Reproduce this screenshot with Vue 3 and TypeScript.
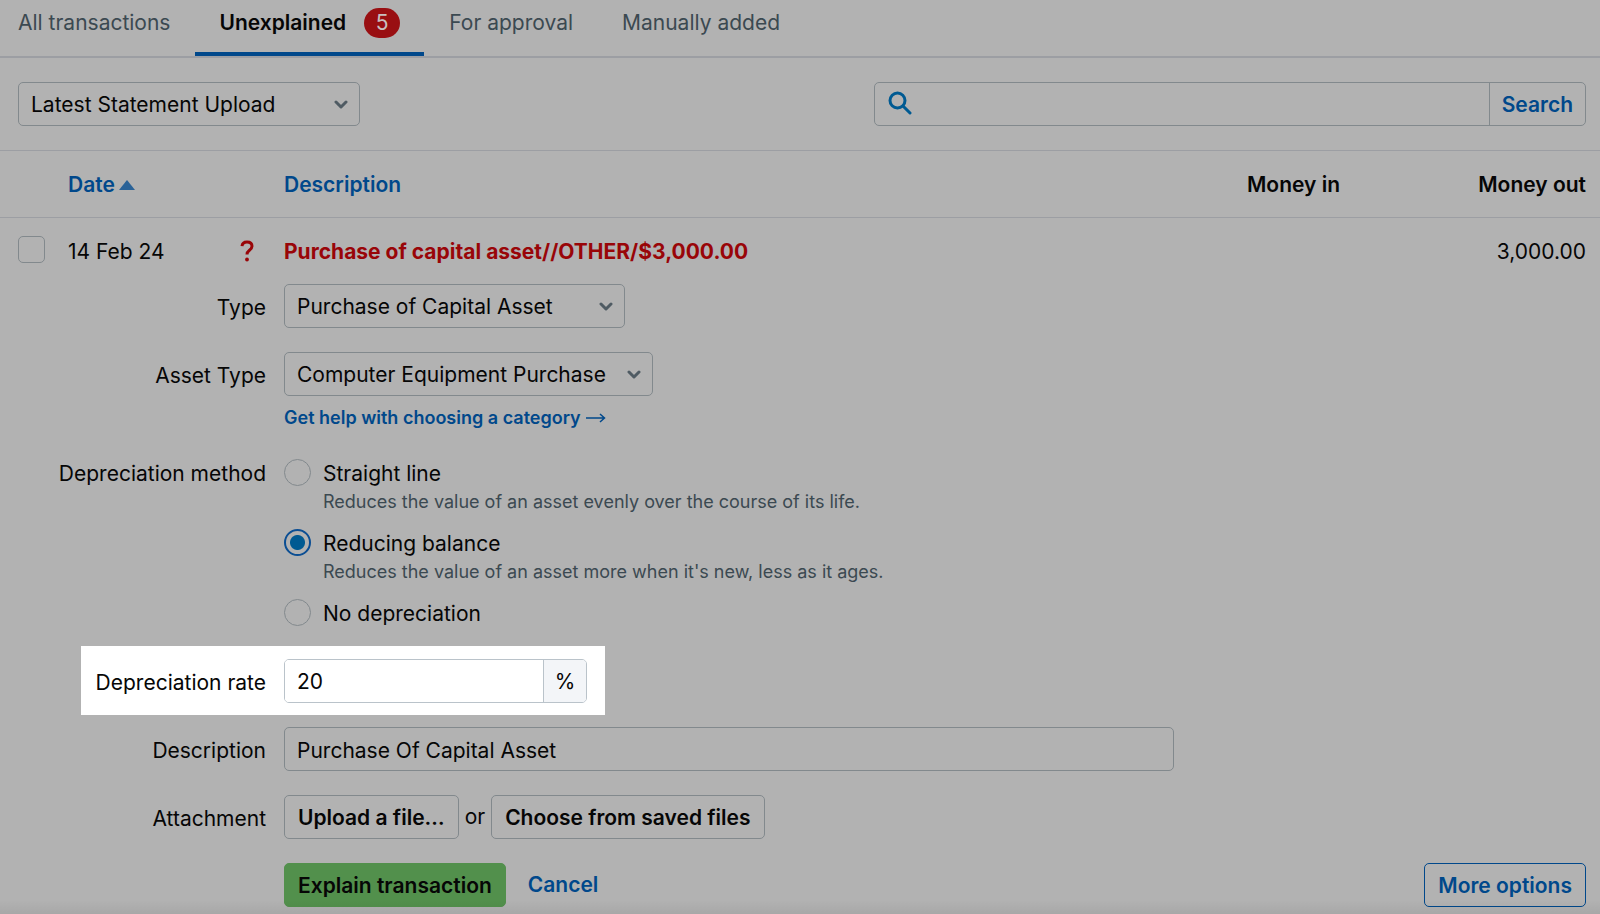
<script setup lang="ts">
import { ref } from 'vue'

interface Tab {
  label: string
  count?: number
}

interface Method {
  id: string
  label: string
  hint?: string
}

const tabs: Tab[] = [
  { label: 'All transactions' },
  { label: 'Unexplained', count: 5 },
  { label: 'For approval' },
  { label: 'Manually added' },
]

const methods: Method[] = [
  {
    id: 'straight',
    label: 'Straight line',
    hint: 'Reduces the value of an asset evenly over the course of its life.',
  },
  {
    id: 'reducing',
    label: 'Reducing balance',
    hint: "Reduces the value of an asset more when it's new, less as it ages.",
  },
  { id: 'none', label: 'No depreciation' },
]

const activeTab = ref('Unexplained')
const query = ref('')
const method = ref('reducing')
const rate = ref('20')
const description = ref('Purchase Of Capital Asset')
</script>

<template>
  <main class="page">
    <nav class="tabs" aria-label="Transaction filters">
      <a
        v-for="tab in tabs"
        :key="tab.label"
        href="#"
        class="tab"
        :class="{ active: tab.label === activeTab }"
        @click.prevent="activeTab = tab.label"
      >
        {{ tab.label }}
        <span v-if="tab.count" class="badge">{{ tab.count }}</span>
      </a>
    </nav>

    <div class="toolbar">
      <div class="select statement">
        <select aria-label="Statement">
          <option>Latest Statement Upload</option>
        </select>
        <svg class="chevron" viewBox="0 0 14 10" aria-hidden="true"><path d="M2 2l5 5 5-5" /></svg>
      </div>
      <form class="search" role="search" @submit.prevent>
        <svg class="magnifier" viewBox="0 0 24 24" aria-hidden="true">
          <circle cx="9.5" cy="9.5" r="7.5" />
          <path d="M15 15l7 7" />
        </svg>
        <input v-model="query" type="text" aria-label="Search transactions" />
        <button type="submit">Search</button>
      </form>
    </div>

    <table class="transactions">
      <colgroup>
        <col class="col-check" />
        <col class="col-date" />
        <col />
        <col class="col-in" />
        <col class="col-out" />
      </colgroup>
      <thead>
        <tr>
          <th></th>
          <th>
            <a href="#" class="sort">Date<svg viewBox="0 0 16 10" aria-hidden="true"><path d="M8 0l8 10H0z" /></svg></a>
          </th>
          <th><a href="#">Description</a></th>
          <th class="num">Money in</th>
          <th class="num last">Money out</th>
        </tr>
      </thead>
      <tbody>
        <tr class="entry">
          <td class="check"><input type="checkbox" aria-label="Select transaction" /></td>
          <td>
            <div class="date">
              <span>14 Feb 24</span>
              <svg viewBox="0 0 14 22" role="img" aria-label="Unexplained">
                <path d="M2 6.2C2.300 3.300 4.300 2 7 2c3 0 5 1.600 5 4.200 0 2.200-1.300 3.200-2.800 4.300C7.700 11.600 7 12.400 7 14.600" />
                <circle cx="7" cy="19.500" r="1.900" />
              </svg>
            </div>
          </td>
          <td class="title">Purchase of capital asset//OTHER/$3,000.00</td>
          <td></td>
          <td class="num last">3,000.00</td>
        </tr>
        <tr>
          <td colspan="5">
            <form class="explain" @submit.prevent>
              <div class="row">
                <label class="label" for="type">Type</label>
                <div class="select type">
                  <select id="type">
                    <option>Purchase of Capital Asset</option>
                  </select>
                  <svg class="chevron" viewBox="0 0 14 10" aria-hidden="true"><path d="M2 2l5 5 5-5" /></svg>
                </div>
              </div>

              <div class="row">
                <label class="label" for="asset">Asset Type</label>
                <div>
                  <div class="select asset">
                    <select id="asset">
                      <option>Computer Equipment Purchase</option>
                    </select>
                    <svg class="chevron" viewBox="0 0 14 10" aria-hidden="true"><path d="M2 2l5 5 5-5" /></svg>
                  </div>
                  <a href="#" class="help">
                    Get help with choosing a category
                    <svg viewBox="0 0 20 12" aria-hidden="true"><path d="M0 6h18M14 2l4.500 4-4.500 4" /></svg>
                  </a>
                </div>
              </div>

              <div class="row methods" role="radiogroup" aria-labelledby="method-label">
                <span id="method-label" class="label">Depreciation method</span>
                <div class="options">
                  <div v-for="m in methods" :key="m.id" class="option">
                    <input :id="m.id" v-model="method" type="radio" name="method" :value="m.id" />
                    <div>
                      <label :for="m.id">{{ m.label }}</label>
                      <p v-if="m.hint">{{ m.hint }}</p>
                    </div>
                  </div>
                </div>
              </div>

              <div class="row spotlight">
                <label class="label" for="rate">Depreciation rate</label>
                <div class="rate">
                  <input id="rate" v-model="rate" type="text" />
                  <span>%</span>
                </div>
              </div>

              <div class="row">
                <label class="label" for="description">Description</label>
                <input id="description" v-model="description" class="text" type="text" />
              </div>

              <div class="row">
                <span class="label">Attachment</span>
                <div class="files">
                  <button type="button" class="button">Upload a file…</button>
                  <span>or</span>
                  <button type="button" class="button">Choose from saved files</button>
                </div>
              </div>

              <div class="actions">
                <button type="submit" class="button primary">Explain transaction</button>
                <a href="#" class="cancel">Cancel</a>
                <button type="button" class="button more">More options</button>
              </div>
            </form>
          </td>
        </tr>
      </tbody>
    </table>
    <div class="edge"></div>
  </main>
</template>

<style>
body {
  margin: 0;
  background: #b2b2b2;
}
</style>

<style scoped>
.page {
  --link: #00488b;
  --line: #9c9ea3;
  --border: #82898d;
  --muted: #3b4951;
  --red: #990508;
  position: relative;
  box-sizing: border-box;
  min-height: 100vh;
  overflow: hidden;
  background: #b2b2b2;
  color: #060606;
  font: 400 21px/30px Inter, 'Liberation Sans', sans-serif;
}

.page *,
.page *::before {
  box-sizing: border-box;
}

a {
  color: var(--link);
  text-decoration: none;
}

input,
select,
button {
  margin: 0;
  font: inherit;
  color: inherit;
}

.tabs {
  display: flex;
  gap: 1px;
  height: 58px;
  border-bottom: 2px solid var(--line);
}

.tab {
  display: flex;
  align-items: center;
  gap: 18px;
  height: 56px;
  padding: 0 24px 6px;
  border-bottom: 4px solid transparent;
  color: var(--muted);
}

.tab:first-child {
  padding-left: 18px;
}

.tab.active {
  border-color: var(--link);
  color: #060606;
  font-weight: 600;
}

.badge {
  width: 36px;
  height: 30px;
  border-radius: 15px;
  background: #990f12;
  color: #c8c0c0;
  font-weight: 400;
  line-height: 30px;
  text-align: center;
}

.toolbar {
  display: flex;
  justify-content: space-between;
  padding: 24px 14px 24px 18px;
  border-bottom: 1px solid var(--line);
}

.select {
  position: relative;
  height: 44px;
}

.select select {
  width: 100%;
  height: 44px;
  padding: 2px 40px 0 12px;
  appearance: none;
  border: 1px solid var(--border);
  border-radius: 5px;
  background: transparent;
}

.chevron {
  position: absolute;
  top: 18px;
  right: 12px;
  width: 14px;
  height: 10px;
  fill: none;
  stroke: #4f5b63;
  stroke-width: 3;
  stroke-linecap: round;
  stroke-linejoin: round;
  pointer-events: none;
}

.statement {
  width: 342px;
}

.type {
  width: 341px;
}

.asset {
  width: 369px;
}

.search {
  display: flex;
  align-items: center;
  width: 46%;
  max-width: 712px;
  height: 44px;
  border: 1px solid var(--border);
  border-radius: 5px;
}

.magnifier {
  width: 24px;
  height: 24px;
  margin: 0 0 2px 13px;
  fill: none;
  stroke: #005a92;
  stroke-width: 3;
  stroke-linecap: round;
}

.search input {
  flex: 1;
  min-width: 0;
  height: 42px;
  padding: 0 12px;
  border: 0;
  background: transparent;
}

.search button {
  height: 42px;
  padding: 2px 12px 0;
  border: 0;
  border-left: 1px solid var(--border);
  background: transparent;
  color: var(--link);
  font-weight: 600;
}

.transactions {
  width: 100%;
  border-collapse: collapse;
  table-layout: fixed;
}

.col-check {
  width: 68px;
}

.col-date {
  width: 216px;
}

.col-in {
  width: 240px;
}

.col-out {
  width: 260px;
}

td,
th {
  padding: 0;
  text-align: left;
}

th {
  height: 66px;
  padding-top: 2px;
  border-bottom: 1px solid var(--line);
  font-weight: 600;
}

.num {
  text-align: right;
}

.last {
  padding-right: 14px;
}

.sort {
  display: inline-flex;
  align-items: center;
  gap: 4px;
}

.sort svg {
  width: 16px;
  height: 10px;
  fill: #2a6297;
}

.entry td {
  height: 67px;
  padding-top: 3px;
}

.entry .check {
  padding: 0 0 2px 18px;
}

.check input {
  display: block;
  width: 27px;
  height: 27px;
  appearance: none;
  border: 1px solid var(--border);
  border-radius: 5px;
}

.date {
  display: flex;
  align-items: center;
  justify-content: space-between;
  padding-right: 30px;
}

.date svg {
  width: 14px;
  height: 22px;
  margin-bottom: 2px;
  fill: none;
  stroke: var(--red);
  stroke-width: 3;
}

.date circle {
  fill: var(--red);
  stroke: none;
}

.title {
  color: var(--red);
  font-weight: 700;
}

.explain {
  display: flex;
  flex-direction: column;
  gap: 24px;
}

.row {
  display: grid;
  grid-template-columns: 266px 1fr;
  column-gap: 18px;
  align-items: start;
}

.label {
  padding-top: 9px;
  text-align: right;
}

.help {
  display: flex;
  align-items: center;
  gap: 5px;
  margin-top: 9px;
  font-size: 18px;
  font-weight: 600;
  line-height: 26px;
}

.help svg {
  width: 20px;
  height: 12px;
  fill: none;
  stroke: var(--link);
  stroke-width: 1.5;
}

.methods .label {
  padding-top: 4px;
}

.options {
  display: flex;
  flex-direction: column;
  gap: 14px;
  padding-top: 4px;
}

.option {
  display: flex;
  gap: 12px;
}

.option p {
  margin: 0;
  color: var(--muted);
  font-size: 18px;
  line-height: 26px;
}

.option label {
  display: block;
}

.option input {
  flex: none;
  width: 27px;
  height: 27px;
  appearance: none;
  border: 1px solid var(--border);
  border-radius: 50%;
}

.option input:checked {
  border: 2px solid #0b4e93;
  background: radial-gradient(circle, #005a92 7px, transparent 8px);
}

.spotlight {
  grid-template-columns: 185px 303px;
  width: fit-content;
  margin: -7px 0 -12px 81px;
  padding: 13px 18px 12px 0;
  background: #fff;
}

.rate {
  display: flex;
  height: 44px;
  overflow: hidden;
  border: 1px solid #bac3ca;
  border-radius: 5px;
}

.rate input {
  flex: 1;
  min-width: 0;
  padding: 2px 12px 0;
  border: 0;
  background: #fff;
}

.rate span {
  width: 43px;
  border-left: 1px solid #bac3ca;
  background: #f3f5f8;
  line-height: 44px;
  text-align: center;
}

.text {
  width: 68%;
  max-width: 890px;
  height: 44px;
  padding: 2px 12px 0;
  border: 1px solid var(--border);
  border-radius: 5px;
  background: transparent;
}

.files {
  display: flex;
  align-items: center;
  gap: 6px;
}

.button {
  height: 44px;
  padding: 2px 13px 0;
  border: 1px solid var(--border);
  border-radius: 5px;
  background: transparent;
  font-weight: 600;
}

.actions {
  display: flex;
  align-items: center;
  padding: 0 14px 0 284px;
}

.primary {
  border-color: #52904c;
  background: #52904c;
}

.cancel {
  margin-left: 22px;
  font-weight: 600;
}

.more {
  margin-left: auto;
  border-color: var(--link);
  color: var(--link);
}

.edge {
  position: absolute;
  right: 0;
  bottom: 0;
  left: 0;
  height: 14px;
  background: linear-gradient(transparent, rgba(0, 0, 0, 0.06));
  pointer-events: none;
}
</style>
